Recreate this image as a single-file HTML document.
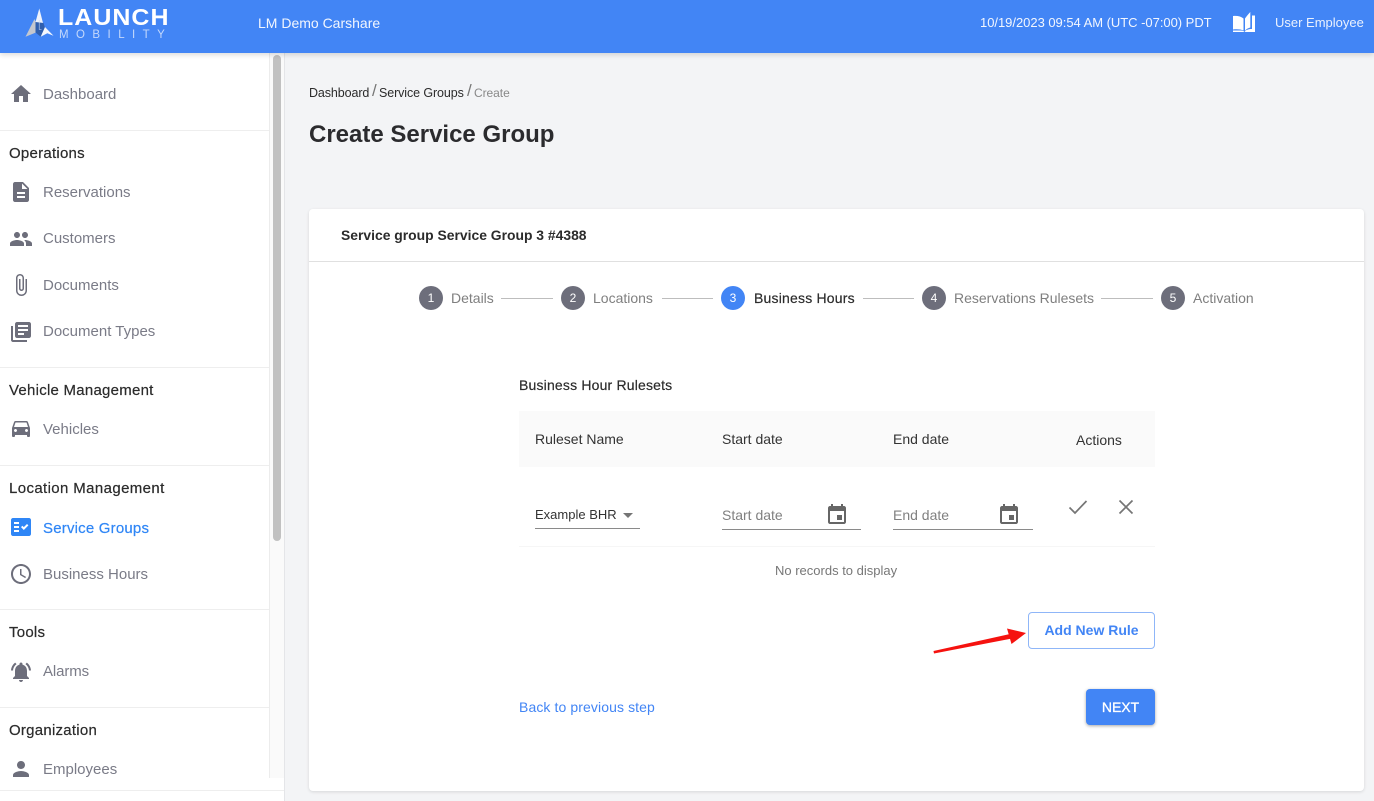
<!DOCTYPE html>
<html lang="en">
<head>
<meta charset="utf-8">
<title>Create Service Group</title>
<style>
html,body{margin:0;padding:0;width:1374px;height:801px;overflow:hidden;background:#f3f4f6;font-family:"Liberation Sans",Arial,sans-serif;}
#r{position:relative;width:1374px;height:801px;overflow:hidden;}
.a{position:absolute;}
.t{position:absolute;white-space:nowrap;line-height:20px;height:20px;}
.nav{font-size:15px;color:#7a7b87;left:43px;margin-top:2px;}
.sec{font-size:15px;color:#2b2b2b;left:9px;letter-spacing:.25px;margin-top:2px;-webkit-text-stroke:.2px #2b2b2b;}
.ic{position:absolute;width:24px;height:24px;fill:#6d6e7b;}
.hr{position:absolute;left:0;width:269px;height:1px;background:#eeeeee;}
.circ{position:absolute;top:286px;width:24px;height:24px;border-radius:50%;background:#6d6e7b;color:#fff;font-size:12px;line-height:24px;text-align:center;}
.step{font-size:14px;color:#7f7f7f;top:288px;}
.ln{position:absolute;top:298px;height:1px;background:#bdbdbd;}
.th{font-size:14px;color:#333;}
.ph{font-size:14px;color:#808080;}
</style>
</head>
<body>
<div id="r">
  <!-- sidebar -->
  <div class="a" style="left:0;top:53px;width:284px;height:748px;background:#fff;"></div>
  <div class="a" style="left:269px;top:53px;width:15px;height:725px;background:#fafafa;border-left:1px solid #ececec;box-sizing:border-box;"></div>
  <div class="a" style="left:273px;top:55px;width:8px;height:486px;background:#c1c1c1;border-radius:4px;"></div>
  <div class="a" style="left:284px;top:53px;width:1px;height:748px;background:#e4e5e8;"></div>

  <svg class="ic" style="left:9px;top:82px" viewBox="0 0 24 24"><path d="M10 20v-6h4v6h5v-8h3L12 3 2 12h3v8z"/></svg>
  <div class="t nav" style="top:83px">Dashboard</div>
  <div class="hr" style="top:130px"></div>

  <div class="t sec" style="top:142px">Operations</div>
  <svg class="ic" style="left:9px;top:180px" viewBox="0 0 24 24"><path d="M14 2H6c-1.100 0-1.990.9-1.990 2L4 20c0 1.100.89 2 1.990 2H18c1.100 0 2-.9 2-2V8l-6-6zm2 16H8v-2h8v2zm0-4H8v-2h8v2zm-3-5V3.500L18.500 9H13z"/></svg>
  <div class="t nav" style="top:181px">Reservations</div>
  <svg class="ic" style="left:9px;top:227px" viewBox="0 0 24 24"><path d="M16 11c1.660 0 2.990-1.340 2.990-3S17.660 5 16 5c-1.660 0-3 1.340-3 3s1.340 3 3 3zm-8 0c1.660 0 2.990-1.340 2.990-3S9.660 5 8 5C6.340 5 5 6.340 5 8s1.340 3 3 3zm0 2c-2.330 0-7 1.170-7 3.500V19h14v-2.500c0-2.330-4.670-3.500-7-3.500zm8 0c-.29 0-.62.02-.97.05 1.160.84 1.970 1.970 1.970 3.450V19h6v-2.500c0-2.330-4.670-3.500-7-3.500z"/></svg>
  <div class="t nav" style="top:227px">Customers</div>
  <svg class="ic" style="left:9px;top:273px" viewBox="0 0 24 24"><path d="M16.500 6v11.500c0 2.210-1.790 4-4 4s-4-1.790-4-4V5c0-1.380 1.120-2.500 2.500-2.500s2.500 1.120 2.500 2.500v10.500c0 .55-.45 1-1 1s-1-.45-1-1V6H10v9.500c0 1.380 1.120 2.500 2.500 2.500s2.500-1.120 2.500-2.500V5c0-2.210-1.790-4-4-4S7 2.790 7 5v12.500c0 3.040 2.460 5.500 5.500 5.500s5.500-2.460 5.500-5.500V6h-1.500z"/></svg>
  <div class="t nav" style="top:274px">Documents</div>
  <svg class="ic" style="left:9px;top:320px" viewBox="0 0 24 24"><path d="M4 6H2v14c0 1.100.9 2 2 2h14v-2H4V6zm16-4H8c-1.100 0-2 .9-2 2v12c0 1.100.9 2 2 2h12c1.100 0 2-.9 2-2V4c0-1.100-.9-2-2-2zm-1 9H9V9h10v2zm-4 4H9v-2h6v2zm4-8H9V5h10v2z"/></svg>
  <div class="t nav" style="top:320px">Document Types</div>
  <div class="hr" style="top:367px"></div>

  <div class="t sec" style="top:379px">Vehicle Management</div>
  <svg class="ic" style="left:9px;top:416px" viewBox="0 0 24 24"><path d="M18.920 6.010C18.720 5.420 18.160 5 17.500 5h-11c-.66 0-1.210.42-1.420 1.010L3 12v8c0 .55.45 1 1 1h1c.55 0 1-.45 1-1v-1h12v1c0 .55.45 1 1 1h1c.55 0 1-.45 1-1v-8l-2.080-5.990zM6.500 16c-.83 0-1.500-.67-1.500-1.500S5.670 13 6.500 13s1.500.67 1.500 1.500S7.330 16 6.500 16zm11 0c-.83 0-1.500-.67-1.500-1.500s.67-1.500 1.500-1.500 1.500.67 1.500 1.500-.67 1.500-1.500 1.500zM5 11l1.500-4.500h11L19 11H5z"/></svg>
  <div class="t nav" style="top:418px">Vehicles</div>
  <div class="hr" style="top:465px"></div>

  <div class="t sec" style="top:477px;letter-spacing:.38px">Location Management</div>
  <svg class="ic" style="left:9px;top:515px;fill:#2f86f6" viewBox="0 0 24 24"><path d="M20 3H4c-1.100 0-2 .9-2 2v14c0 1.100.9 2 2 2h16c1.100 0 2-.9 2-2V5c0-1.100-.9-2-2-2zm-10 14H5v-2h5v2zm0-4H5v-2h5v2zm0-4H5V7h5v2zm4.820 6L12 12.160l1.410-1.410 1.410 1.420L17.990 9l1.420 1.420L14.820 15z"/></svg>
  <div class="t nav" style="top:517px;color:#2f86f6;letter-spacing:.2px;-webkit-text-stroke:.2px #2f86f6">Service Groups</div>
  <svg class="ic" style="left:9px;top:562px" viewBox="0 0 24 24"><path d="M11.990 2C6.470 2 2 6.480 2 12s4.470 10 9.990 10C17.520 22 22 17.520 22 12S17.520 2 11.990 2zM12 20c-4.420 0-8-3.580-8-8s3.580-8 8-8 8 3.580 8 8-3.580 8-8 8zm.5-13H11v6l5.250 3.150.75-1.230-4.500-2.670z"/></svg>
  <div class="t nav" style="top:563px">Business Hours</div>
  <div class="hr" style="top:609px"></div>

  <div class="t sec" style="top:621px">Tools</div>
  <svg class="ic" style="left:9px;top:660px" viewBox="0 0 24 24"><path d="M7.580 4.080L6.150 2.650C3.750 4.480 2.170 7.300 2.030 10.500h2c.15-2.650 1.510-4.970 3.550-6.420zm12.390 6.420h2c-.15-3.200-1.730-6.020-4.120-7.850l-1.420 1.430c2.020 1.450 3.390 3.770 3.540 6.420zM18 11c0-3.070-1.640-5.640-4.500-6.320V4c0-.83-.67-1.500-1.500-1.500s-1.500.67-1.500 1.500v.68C7.630 5.360 6 7.920 6 11v5l-2 2v1h16v-1l-2-2v-5zm-6 11c.14 0 .27-.01.4-.04.65-.14 1.180-.58 1.440-1.180.1-.24.15-.5.15-.78h-4c.01 1.100.9 2 2.010 2z"/></svg>
  <div class="t nav" style="top:660px;letter-spacing:-.1px">Alarms</div>
  <div class="hr" style="top:707px"></div>

  <div class="t sec" style="top:719px">Organization</div>
  <svg class="ic" style="left:9px;top:757px" viewBox="0 0 24 24"><path d="M12 12c2.210 0 4-1.790 4-4s-1.790-4-4-4-4 1.790-4 4 1.790 4 4 4zm0 2c-2.670 0-8 1.340-8 4v2h16v-2c0-2.660-5.330-4-8-4z"/></svg>
  <div class="t nav" style="top:758px">Employees</div>
  <div class="a" style="left:0;top:778px;width:284px;height:12px;background:#fff;"></div>
  <div class="a" style="left:0;top:790px;width:284px;height:1px;background:#eeeeee;"></div>

  <!-- header -->
  <div class="a" style="left:0;top:0;width:1374px;height:53px;background:#4285f5;box-shadow:0 2px 5px rgba(0,0,0,.14);"></div>
  <svg class="a" style="left:20px;top:4px" width="40" height="38" viewBox="20 4 40 38">
    <polygon points="39.300,8.500 35.200,23 43,23" fill="#eef3fc"/>
    <polygon points="34.500,19 25.500,36.700 36,32.500 36,23" fill="#c3c7cf"/>
    <polygon points="35.500,22 43.500,23 45,28 40.700,36.800 35.500,32.500" fill="#2f5fae"/>
    <polygon points="45,27 53.500,35.800 47.300,33.300 40.700,36.800" fill="#f4f7fd"/>
    <path d="M39.200 20V29.500H41.500" fill="none" stroke="#c9d8f4" stroke-width=".6"/>
  </svg>
  <div class="t" style="left:58px;top:7px;font-size:23px;font-weight:bold;color:#fff;letter-spacing:.95px;transform:scaleX(1.085);transform-origin:0 50%;">LAUNCH</div>
  <div class="t" style="left:59px;top:25px;font-size:11.500px;color:#c4d8fb;letter-spacing:7.450px;">MOBILITY</div>
  <div class="t" style="left:258px;top:13px;font-size:14px;color:#f2f6fe;">LM Demo Carshare</div>
  <div class="t" style="left:980px;top:13px;font-size:13px;color:#f2f6fe;letter-spacing:-.03px;">10/19/2023 09:54 AM (UTC -07:00) PDT</div>
  <svg class="a" style="left:1233px;top:12px" width="22" height="20" viewBox="0 0 22 20">
    <path d="M0 4C4 3.500 8 4.300 10.500 6.500V18.500C8 17.300 4 17 0 17.500z" fill="#fff"/>
    <path d="M12 6.500C13.500 4.500 15.300 2 17.300 0V15.500C15.300 16 13.500 17 12 18.500z" fill="#fff"/>
    <path d="M19 3.500H22V20H12.500L11.500 19.300 10.500 20H0V18.500H8C9.500 18.500 10.500 19 11.300 19.500 13 18 15.500 17 19 17z" fill="#fff"/>
  </svg>
  <div class="t" style="left:1275px;top:13px;font-size:13px;color:#eaf1fe;">User Employee</div>

  <!-- breadcrumb -->
  <div class="t" style="left:309px;top:83px;font-size:12.500px;color:#2b2b2b;letter-spacing:-.1px;">Dashboard</div>
  <div class="t" style="left:372px;top:81px;font-size:17px;color:#777;">/</div>
  <div class="t" style="left:379px;top:83px;font-size:12.500px;color:#2b2b2b;letter-spacing:-.1px;">Service Groups</div>
  <div class="t" style="left:467px;top:81px;font-size:17px;color:#777;">/</div>
  <div class="t" style="left:474px;top:83px;font-size:12px;color:#888;letter-spacing:-.05px;">Create</div>
  <div class="t" style="left:309px;top:120px;height:30px;line-height:30px;font-size:24px;font-weight:bold;color:#2b2b2e;">Create Service Group</div>

  <!-- card -->
  <div class="a" style="left:309px;top:209px;width:1055px;height:582px;background:#fff;border-radius:4px;box-shadow:0 1px 3px rgba(0,0,0,.12);"></div>
  <div class="t" style="left:341px;top:225px;font-size:13.900px;font-weight:bold;color:#2b2b2b;">Service group Service Group 3 #4388</div>
  <div class="a" style="left:309px;top:261px;width:1055px;height:1px;background:#e0e0e0;"></div>

  <!-- stepper -->
  <div class="circ" style="left:419px">1</div>
  <div class="t step" style="left:451px">Details</div>
  <div class="ln" style="left:501px;width:52px"></div>
  <div class="circ" style="left:561px">2</div>
  <div class="t step" style="left:593px">Locations</div>
  <div class="ln" style="left:662px;width:51px"></div>
  <div class="circ" style="left:721px;background:#4285f5">3</div>
  <div class="t step" style="left:754px;color:#2b2b2b;letter-spacing:.2px;-webkit-text-stroke:.2px #2b2b2b">Business Hours</div>
  <div class="ln" style="left:863px;width:51px"></div>
  <div class="circ" style="left:922px">4</div>
  <div class="t step" style="left:954px">Reservations Rulesets</div>
  <div class="ln" style="left:1101px;width:52px"></div>
  <div class="circ" style="left:1161px">5</div>
  <div class="t step" style="left:1193px">Activation</div>

  <!-- table -->
  <div class="t" style="left:519px;top:375px;font-size:14px;letter-spacing:.18px;color:#2b2b2b;-webkit-text-stroke:.2px #2b2b2b;">Business Hour Rulesets</div>
  <div class="a" style="left:519px;top:411px;width:636px;height:56px;background:#fafafa;"></div>
  <div class="t th" style="left:535px;top:429px">Ruleset Name</div>
  <div class="t th" style="left:722px;top:429px">Start date</div>
  <div class="t th" style="left:893px;top:429px">End date</div>
  <div class="t th" style="left:1076px;top:430px">Actions</div>

  <div class="t" style="left:535px;top:505px;font-size:13px;color:#333">Example BHR</div>
  <div class="a" style="left:623px;top:513px;width:0;height:0;border-left:5px solid transparent;border-right:5px solid transparent;border-top:5px solid #757575;"></div>
  <div class="a" style="left:535px;top:528px;width:105px;height:1px;background:#8a8a8a"></div>

  <div class="t ph" style="left:722px;top:505px">Start date</div>
  <svg class="ic" style="left:825px;top:503px;fill:#666" viewBox="0 0 24 24"><path d="M17 12h-5v5h5v-5zM16 1v2H8V1H6v2H5c-1.110 0-1.990.9-1.990 2L3 19c0 1.100.89 2 2 2h14c1.100 0 2-.9 2-2V5c0-1.100-.9-2-2-2h-1V1h-2zm3 18H5V8h14v11z"/></svg>
  <div class="a" style="left:722px;top:529px;width:139px;height:1px;background:#8a8a8a"></div>

  <div class="t ph" style="left:893px;top:505px">End date</div>
  <svg class="ic" style="left:997px;top:503px;fill:#666" viewBox="0 0 24 24"><path d="M17 12h-5v5h5v-5zM16 1v2H8V1H6v2H5c-1.110 0-1.990.9-1.990 2L3 19c0 1.100.89 2 2 2h14c1.100 0 2-.9 2-2V5c0-1.100-.9-2-2-2h-1V1h-2zm3 18H5V8h14v11z"/></svg>
  <div class="a" style="left:893px;top:529px;width:140px;height:1px;background:#8a8a8a"></div>

  <svg class="a" style="left:1066px;top:495px" width="24" height="24" viewBox="0 0 24 24"><path d="M3.500 12.500L9 18 20.500 6" fill="none" stroke="#757575" stroke-width="1.700"/></svg>
  <svg class="a" style="left:1114px;top:495px" width="24" height="24" viewBox="0 0 24 24"><path d="M5.500 5.500L18.500 18.500M18.500 5.500L5.500 18.500" fill="none" stroke="#757575" stroke-width="1.700"/></svg>

  <div class="a" style="left:519px;top:546px;width:636px;height:1px;background:#f6f6f6"></div>
  <div class="t" style="left:775px;top:561px;font-size:13px;color:#777">No records to display</div>

  <!-- buttons -->
  <div class="a" style="left:1028px;top:612px;width:127px;height:37px;box-sizing:border-box;border:1px solid #8fb6f8;border-radius:4px;background:#fff;color:#4285f5;font-size:14px;font-weight:bold;line-height:35px;text-align:center;">Add New Rule</div>
  <svg class="a" style="left:925px;top:620px" width="105" height="40" viewBox="925 620 105 40">
    <polygon points="933.500,651 1010,634 1012,638.500 934,653.500" fill="#f5120f"/>
    <polygon points="1026,633 1007,628.500 1011.500,644" fill="#f5120f"/>
  </svg>
  <div class="t" style="left:519px;top:697px;font-size:14px;letter-spacing:.1px;color:#4285f5">Back to previous step</div>
  <div class="a" style="left:1086px;top:689px;width:69px;height:36px;background:#4285f5;border-radius:4px;box-shadow:0 1px 3px rgba(0,0,0,.35);color:#fff;font-size:14px;font-weight:500;line-height:36px;text-align:center;-webkit-text-stroke:.3px #fff;">NEXT</div>
</div>
</body>
</html>
